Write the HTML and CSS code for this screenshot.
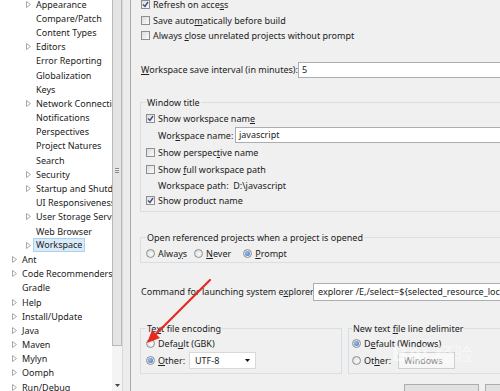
FILE: index.html
```html
<!DOCTYPE html>
<html>
<head lang="en">
    <meta charset="UTF-8">
    <title>Preferences - Workspace</title>
    <link rel="stylesheet" href="styles.css">
</head>
<body>
<div id="window">
    <div id="tree">
        <ul>
            <li class="sub"><i class="tw"><svg width="5" height="7"><path d="M0.5 0.5L4.5 3.5L0.5 6.5Z"/></svg></i>Appearance</li>
            <li class="sub"><i class="tw"></i>Compare/Patch</li>
            <li class="sub"><i class="tw"></i>Content Types</li>
            <li class="sub"><i class="tw"><svg width="5" height="7"><path d="M0.5 0.5L4.5 3.5L0.5 6.5Z"/></svg></i>Editors</li>
            <li class="sub"><i class="tw"></i>Error Reporting</li>
            <li class="sub"><i class="tw"></i>Globalization</li>
            <li class="sub"><i class="tw"></i>Keys</li>
            <li class="sub"><i class="tw"><svg width="5" height="7"><path d="M0.5 0.5L4.5 3.5L0.5 6.5Z"/></svg></i>Network Connections</li>
            <li class="sub"><i class="tw"></i>Notifications</li>
            <li class="sub"><i class="tw"></i>Perspectives</li>
            <li class="sub"><i class="tw"></i>Project Natures</li>
            <li class="sub"><i class="tw"></i>Search</li>
            <li class="sub"><i class="tw"><svg width="5" height="7"><path d="M0.5 0.5L4.5 3.5L0.5 6.5Z"/></svg></i>Security</li>
            <li class="sub"><i class="tw"><svg width="5" height="7"><path d="M0.5 0.5L4.5 3.5L0.5 6.5Z"/></svg></i>Startup and Shutdown</li>
            <li class="sub"><i class="tw"></i>UI Responsiveness</li>
            <li class="sub"><i class="tw"><svg width="5" height="7"><path d="M0.5 0.5L4.5 3.5L0.5 6.5Z"/></svg></i>User Storage Service</li>
            <li class="sub"><i class="tw"></i>Web Browser</li>
            <li class="sub"><i class="tw"><svg width="5" height="7"><path d="M0.5 0.5L4.5 3.5L0.5 6.5Z"/></svg></i><span class="selected">Workspace</span></li>
            <li class="top"><i class="tw"><svg width="5" height="7"><path d="M0.5 0.5L4.5 3.5L0.5 6.5Z"/></svg></i>Ant</li>
            <li class="top"><i class="tw"><svg width="5" height="7"><path d="M0.5 0.5L4.5 3.5L0.5 6.5Z"/></svg></i>Code Recommenders</li>
            <li class="top"><i class="tw"></i>Gradle</li>
            <li class="top"><i class="tw"><svg width="5" height="7"><path d="M0.5 0.5L4.5 3.5L0.5 6.5Z"/></svg></i>Help</li>
            <li class="top"><i class="tw"><svg width="5" height="7"><path d="M0.5 0.5L4.5 3.5L0.5 6.5Z"/></svg></i>Install/Update</li>
            <li class="top"><i class="tw"><svg width="5" height="7"><path d="M0.5 0.5L4.5 3.5L0.5 6.5Z"/></svg></i>Java</li>
            <li class="top"><i class="tw"><svg width="5" height="7"><path d="M0.5 0.5L4.5 3.5L0.5 6.5Z"/></svg></i>Maven</li>
            <li class="top"><i class="tw"><svg width="5" height="7"><path d="M0.5 0.5L4.5 3.5L0.5 6.5Z"/></svg></i>Mylyn</li>
            <li class="top"><i class="tw"><svg width="5" height="7"><path d="M0.5 0.5L4.5 3.5L0.5 6.5Z"/></svg></i>Oomph</li>
            <li class="top"><i class="tw"><svg width="5" height="7"><path d="M0.5 0.5L4.5 3.5L0.5 6.5Z"/></svg></i>Run/Debug</li>
        </ul>
    </div>
    <div id="vscroll">
        <div class="thumb"><span class="grip"></span></div>
        <div class="track"></div>
        <div class="down"><svg width="5" height="3"><path d="M0 0H5L2.5 3Z"/></svg></div>
    </div>
    <div id="sash"></div>
    <div id="page">
        <div class="inner">
            <div class="row check first"><span class="cb on"><svg width="7" height="7"><path d="M1 3.5L3 5.5L6 1"/></svg></span><span>Refresh on acce<u>s</u>s</span></div>
            <div class="row check"><span class="cb"></span><span>Save auto<u>m</u>atically before build</span></div>
            <div class="row check"><span class="cb"></span><span>Always <u>c</u>lose unrelated projects without prompt</span></div>

            <div class="row interval"><span class="lbl"><u>W</u>orkspace save interval (in minutes):</span><span class="field">5</span></div>

            <fieldset class="group title-group">
                <legend>Window title</legend>
                <div class="row r17"><span class="cb on"><svg width="7" height="7"><path d="M1 3.5L3 5.5L6 1"/></svg></span><span>Show workspace nam<u>e</u></span></div>
                <div class="row r17 indent"><span class="lbl name">Wor<u>k</u>space name:</span><span class="field">javascript</span></div>
                <div class="row r17"><span class="cb"></span><span>Show perspec<u>t</u>ive name</span></div>
                <div class="row r17"><span class="cb"></span><span>Show <u>f</u>ull workspace path</span></div>
                <div class="row r16 indent"><span>Workspace path:&nbsp; D:\javascript</span></div>
                <div class="row r14"><span class="cb on"><svg width="7" height="7"><path d="M1 3.5L3 5.5L6 1"/></svg></span><span>Show product name</span></div>
            </fieldset>

            <fieldset class="group open-group">
                <legend>Open referenced projects when a project is opened</legend>
                <div class="row r17 radios">
                    <span class="opt"><span class="rb"></span><span>Alwa<u>y</u>s</span></span>
                    <span class="opt"><span class="rb"></span><span><u>N</u>ever</span></span>
                    <span class="opt"><span class="rb on"></span><span><u>P</u>rompt</span></span>
                </div>
            </fieldset>

            <div class="row command"><span class="lbl">Command for launching system e<u>x</u>plorer:</span><span class="field">explorer /E,/select=${selected_resource_loc}</span></div>

            <div class="bottom">
                <fieldset class="group enc-group">
                    <legend>Te<u>x</u>t file encoding</legend>
                    <div class="row r16"><span class="rb"></span><span>Defa<u>u</u>lt (GBK)</span></div>
                    <div class="row r17"><span class="rb on"></span><span class="lbl other"><u>O</u>ther:</span><span class="select"><span>UTF-8</span><svg width="5" height="3"><path d="M0 0H5L2.5 3Z"/></svg></span></div>
                </fieldset>
                <fieldset class="group delim-group">
                    <legend>New text <u>f</u>ile line delimiter</legend>
                    <div class="row r16"><span class="rb on"></span><span>D<u>e</u>fault (Windows)</span></div>
                    <div class="row r17"><span class="rb"></span><span class="lbl other2">Ot<u>h</u>er:</span><span class="select off"><span>Windows</span></span></div>
                </fieldset>
            </div>

            <div class="buttons">
                <span class="btn wide">Restore Defaults</span>
                <span class="btn">Apply</span>
            </div>
        </div>
    </div>
</div>
<svg id="arrow" width="500" height="391">
    <path class="shaft" d="M210 280L154 336"/>
    <path class="head" d="M147 343L152 330L160 338Z"/>
</svg>
<div id="mark">Bai<span>经验</span></div>
</body>
</html>
```

FILE: styles.css
```css
*{
    margin: 0;
    padding: 0;
    box-sizing: border-box;
}
ul{
    list-style: none;
}
body{
    width: 500px;
    height: 391px;
    overflow: hidden;
    position: relative;
    background: #f0f0f0;
    font-family: "Noto Sans", "Noto Sans CJK SC", sans-serif;
    font-size: 9px;
    color: #222;
}
u{
    text-decoration: underline;
    text-underline-offset: 1px;
}
#window{
    display: flex;
    height: 391px;
}

/* tree */
#tree{
    width: 112px;
    flex: none;
    background: #fff;
    overflow: hidden;
}
#tree ul{
    margin-top: -3px;
}
#tree li{
    display: flex;
    align-items: center;
    height: 14.2px;
    white-space: nowrap;
}
#tree li.sub{
    padding-left: 26px;
}
#tree li.top{
    padding-left: 12px;
}
#tree .tw{
    width: 10px;
    flex: none;
    display: flex;
    align-items: center;
}
#tree .tw path{
    fill: none;
    stroke: #a8a8a8;
    stroke-width: 1;
}
#tree .selected{
    background: #d9ebf9;
    border: 1px solid #a9d2f2;
    padding: 0 2px;
    margin-left: -3px;
    line-height: 12px;
}

/* scrollbar + sash */
#vscroll{
    width: 10px;
    flex: none;
    display: flex;
    flex-direction: column;
    background: #f4f4f4;
}
#vscroll .thumb{
    height: 346px;
    background: #e4e4e4;
    border: 1px solid #b9b9b9;
    border-top: none;
    display: flex;
    align-items: center;
    justify-content: center;
}
#vscroll .grip{
    width: 4px;
    height: 5px;
    border-top: 1px solid #8a8a8a;
    border-bottom: 1px solid #8a8a8a;
    background: linear-gradient(#f4f4f4 1px, #8a8a8a 1px, #8a8a8a 2px, #e4e4e4 2px);
    margin-top: -4px;
}
#vscroll .track{
    flex: 1;
}
#vscroll .down{
    height: 11px;
    display: flex;
    justify-content: center;
    align-items: center;
}
#vscroll .down path{
    fill: #444;
}
#sash{
    width: 9px;
    flex: none;
    background: #ececec;
    border-left: 1px solid #d8d8d8;
    border-right: 1px solid #a9a9a9;
}

/* page */
#page{
    flex: 1;
    overflow: hidden;
    padding-left: 10px;
}
#page .inner{
    width: 400px;
}
.row{
    display: flex;
    align-items: center;
    white-space: nowrap;
}
.check{
    height: 15.5px;
}
.first{
    margin-top: -3px;
}
.cb{
    width: 9px;
    height: 9px;
    flex: none;
    border: 1px solid #8e8f8f;
    background: linear-gradient(135deg, #dcdcdc, #fbfbfb);
    margin-right: 3px;
    display: flex;
    align-items: center;
    justify-content: center;
}
.cb path{
    fill: none;
    stroke: #3d4f86;
    stroke-width: 1.4;
}
.rb{
    width: 9px;
    height: 9px;
    flex: none;
    border: 1px solid #8e8f8f;
    border-radius: 50%;
    background: radial-gradient(circle at 60% 60%, #fbfbfb, #d4d4d4);
    margin-right: 3px;
    position: relative;
}
.rb.on::after{
    content: "";
    position: absolute;
    left: 1px;
    top: 1px;
    width: 5px;
    height: 5px;
    border-radius: 50%;
    background: radial-gradient(circle at 40% 40%, #9cc4f2, #2d66c4);
}
.field{
    flex: 1;
    height: 16px;
    line-height: 14px;
    background: #fff;
    border: 1px solid #abadb3;
    border-right: none;
    padding-left: 3px;
    overflow: hidden;
}
.interval{
    height: 16px;
    margin-top: 18px;
}
.interval .lbl{
    width: 157px;
}

/* group boxes */
.group{
    border: 1px solid #d5dfe5;
    margin-left: -1px;
    padding: 0 0 0 5px;
}
.group legend{
    margin-left: 0;
    padding: 0 1px;
    line-height: 14px;
}
.title-group{
    margin-top: 18px;
    padding-bottom: 3px;
}
.r17{
    height: 17px;
}
.r16{
    height: 16px;
}
.r14{
    height: 14px;
}
.indent{
    padding-left: 12px;
}
.indent .lbl.name{
    width: 77px;
}
.open-group{
    margin-top: 19px;
}
.radios .opt{
    display: flex;
    align-items: center;
    margin-right: 7px;
}
.radios .opt:nth-child(2){
    margin-right: 12px;
}
.command{
    height: 18px;
    margin-top: 20px;
}
.command .lbl{
    width: 172px;
}
.command .field{
    height: 18px;
    line-height: 16px;
    padding-left: 4px;
}

/* bottom groups */
.bottom{
    display: flex;
    gap: 6px;
    margin-top: 21px;
}
.enc-group{
    width: 202px;
    flex: none;
    padding-bottom: 4px;
}
.delim-group{
    flex: 1;
    margin-left: 0;
    padding-left: 3px;
    padding-bottom: 4px;
}
.lbl.other{
    width: 31px;
}
.lbl.other2{
    width: 34px;
}
.select{
    width: 67px;
    height: 17px;
    background: #fff;
    border: 1px solid #d9d9d9;
    display: flex;
    align-items: center;
    justify-content: space-between;
    padding: 0 5px 0 5px;
}
.select path{
    fill: #111;
}
.select.off{
    width: 57px;
    color: #8a8a8a;
    background: #f7f7f7;
    border-color: #cfcfcf;
}
.buttons{
    display: flex;
    justify-content: flex-end;
    gap: 6px;
    margin-top: 10px;
}
.btn{
    width: 56px;
    height: 22px;
    border: 1px solid #adadad;
    background: #e1e1e1;
    text-align: center;
    line-height: 20px;
}
.btn.wide{
    width: 75px;
}

/* overlays */
#arrow{
    position: absolute;
    left: 0;
    top: 0;
    pointer-events: none;
}
#arrow .shaft{
    stroke: #e52a22;
    stroke-width: 2.2;
    stroke-linecap: round;
}
#arrow .head{
    fill: #e52a22;
}
#mark{
    position: absolute;
    left: 392px;
    top: 340px;
    font-family: "Liberation Sans", sans-serif;
    font-size: 22px;
    font-weight: bold;
    color: rgba(255, 255, 255, 0.5);
    letter-spacing: 1px;
}
#mark span{
    font-family: "Noto Sans CJK SC", sans-serif;
    font-weight: normal;
    font-size: 18px;
    margin-left: 6px;
}
```
